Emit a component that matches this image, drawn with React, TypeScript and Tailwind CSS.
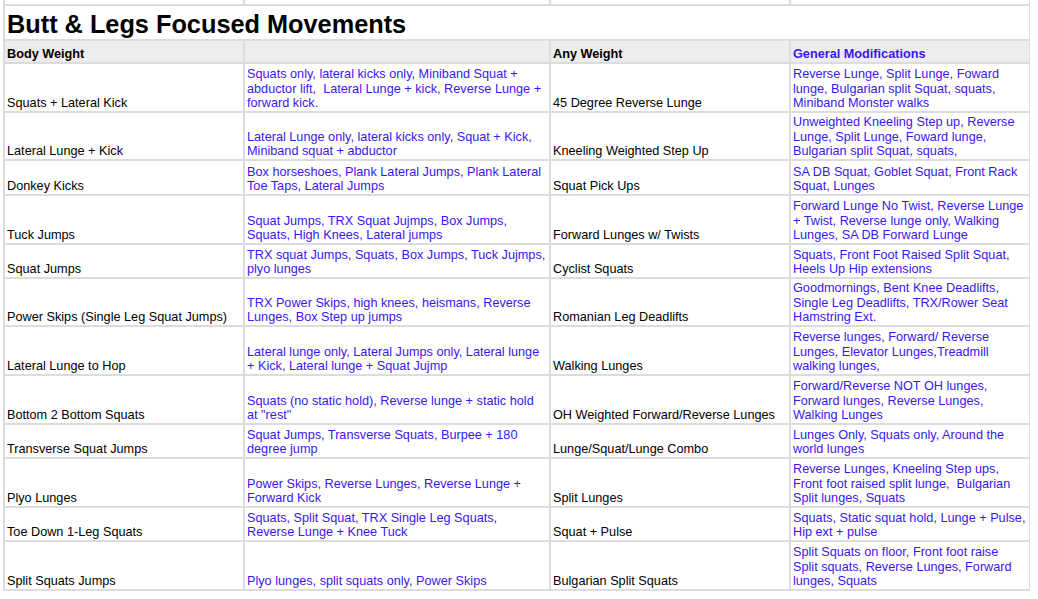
type Row = {
  name: string;
  mods: string[];
  weighted: string;
  general: string[];
  h: string;
};

const rows: Row[] = [
  {
    name: "Squats + Lateral Kick",
    mods: [
      "Squats only, lateral kicks only, Miniband Squat +",
      "abductor lift,  Lateral Lunge + kick, Reverse Lunge +",
      "forward kick.",
    ],
    weighted: "45 Degree Reverse Lunge",
    general: [
      "Reverse Lunge, Split Lunge, Foward",
      "lunge, Bulgarian split Squat, squats,",
      "Miniband Monster walks",
    ],
    h: "h-[47px]",
  },
  {
    name: "Lateral Lunge + Kick",
    mods: ["Lateral Lunge only, lateral kicks only, Squat + Kick,", "Miniband squat + abductor"],
    weighted: "Kneeling Weighted Step Up",
    general: [
      "Unweighted Kneeling Step up, Reverse",
      "Lunge, Split Lunge, Foward lunge,",
      "Bulgarian split Squat, squats,",
    ],
    h: "h-[46px]",
  },
  {
    name: "Donkey Kicks",
    mods: ["Box horseshoes, Plank Lateral Jumps, Plank Lateral", "Toe Taps, Lateral Jumps"],
    weighted: "Squat Pick Ups",
    general: ["SA DB Squat, Goblet Squat, Front Rack", "Squat, Lunges"],
    h: "h-[33px]",
  },
  {
    name: "Tuck Jumps",
    mods: ["Squat Jumps, TRX Squat Jujmps, Box Jumps,", "Squats, High Knees, Lateral jumps"],
    weighted: "Forward Lunges w/ Twists",
    general: [
      "Forward Lunge No Twist, Reverse Lunge",
      "+ Twist, Reverse lunge only, Walking",
      "Lunges, SA DB Forward Lunge",
    ],
    h: "h-[47px]",
  },
  {
    name: "Squat Jumps",
    mods: ["TRX squat Jumps, Squats, Box Jumps, Tuck Jujmps,", "plyo lunges"],
    weighted: "Cyclist Squats",
    general: ["Squats, Front Foot Raised Split Squat,", "Heels Up Hip extensions"],
    h: "h-[32px]",
  },
  {
    name: "Power Skips (Single Leg Squat Jumps)",
    mods: ["TRX Power Skips, high knees, heismans, Reverse", "Lunges, Box Step up jumps"],
    weighted: "Romanian Leg Deadlifts",
    general: [
      "Goodmornings, Bent Knee Deadlifts,",
      "Single Leg Deadlifts, TRX/Rower Seat",
      "Hamstring Ext.",
    ],
    h: "h-[46px]",
  },
  {
    name: "Lateral Lunge to Hop",
    mods: [
      "Lateral lunge only, Lateral Jumps only, Lateral lunge",
      "+ Kick, Lateral lunge + Squat Jujmp",
    ],
    weighted: "Walking Lunges",
    general: [
      "Reverse lunges, Forward/ Reverse",
      "Lunges, Elevator Lunges,Treadmill",
      "walking lunges,",
    ],
    h: "h-[47px]",
  },
  {
    name: "Bottom 2 Bottom Squats",
    mods: ["Squats (no static hold), Reverse lunge + static hold", 'at "rest"'],
    weighted: "OH Weighted Forward/Reverse Lunges",
    general: [
      "Forward/Reverse NOT OH lunges,",
      "Forward lunges, Reverse Lunges,",
      "Walking Lunges",
    ],
    h: "h-[47px]",
  },
  {
    name: "Transverse Squat Jumps",
    mods: ["Squat Jumps, Transverse Squats, Burpee + 180", "degree jump"],
    weighted: "Lunge/Squat/Lunge Combo",
    general: ["Lunges Only, Squats only, Around the", "world lunges"],
    h: "h-[32px]",
  },
  {
    name: "Plyo Lunges",
    mods: ["Power Skips, Reverse Lunges, Reverse Lunge +", "Forward Kick"],
    weighted: "Split Lunges",
    general: [
      "Reverse Lunges, Kneeling Step ups,",
      "Front foot raised split lunge,  Bulgarian",
      "Split lunges, Squats",
    ],
    h: "h-[47px]",
  },
  {
    name: "Toe Down 1-Leg Squats",
    mods: ["Squats, Split Squat, TRX Single Leg Squats,", "Reverse Lunge + Knee Tuck"],
    weighted: "Squat + Pulse",
    general: ["Squats, Static squat hold, Lunge + Pulse,", "Hip ext + pulse"],
    h: "h-[32px]",
  },
  {
    name: "Split Squats Jumps",
    mods: ["Plyo lunges, split squats only, Power Skips"],
    weighted: "Bulgarian Split Squats",
    general: [
      "Split Squats on floor, Front foot raise",
      "Split squats, Reverse Lunges, Forward",
      "lunges, Squats",
    ],
    h: "h-[47px]",
  },
];

function Cell({ lines, blue, h }: { lines: string[]; blue?: boolean; h: string }) {
  return (
    <div
      className={`${h} bg-white flex flex-col justify-end overflow-visible pl-[2px] text-[12.7px] leading-[14.7px] whitespace-pre ${
        blue ? "text-[#3a16f4]" : "text-black"
      }`}
    >
      {lines.map((l, i) => (
        <div key={i}>{l}</div>
      ))}
    </div>
  );
}

export default function App() {
  return (
    <div className="w-[1038px] h-[599px] bg-white overflow-hidden" style={{ fontFamily: '"Liberation Sans", Arial, sans-serif' }}>
      <div className="ml-[3px] w-[1027px] bg-[#dcdcdc] px-[2px] pb-[2px] grid grid-cols-[238px_304px_238px_238px] gap-[2px]">
        {/* partial row above the title */}
        <div className="h-[4px] bg-white" />
        <div className="h-[4px] bg-white" />
        <div className="h-[4px] bg-white" />
        <div className="h-[4px] bg-white" />

        <div className="col-span-4 h-[33px] bg-white flex items-end pl-[2px] pb-[1px]">
          <span className="text-[25.3px] leading-[28px] font-bold text-black">
            Butt &amp; Legs Focused Movements
          </span>
        </div>

        <div className="h-[21px] bg-[#ededed] flex items-end pl-[2px] leading-[15px] text-[12.7px] font-bold text-black">
          Body Weight
        </div>
        <div className="h-[21px] bg-[#ededed]" />
        <div className="h-[21px] bg-[#ededed] flex items-end pl-[2px] leading-[15px] text-[12.7px] font-bold text-black">
          Any Weight
        </div>
        <div className="h-[21px] bg-[#ededed] flex items-end pl-[2px] leading-[15px] text-[12.7px] font-bold text-[#3a16f4]">
          General Modifications
        </div>

        {rows.map((r) => (
          <div key={r.name} className="contents">
            <Cell lines={[r.name]} h={r.h} />
            <Cell lines={r.mods} blue h={r.h} />
            <Cell lines={[r.weighted]} h={r.h} />
            <Cell lines={r.general} blue h={r.h} />
          </div>
        ))}
      </div>
    </div>
  );
}
